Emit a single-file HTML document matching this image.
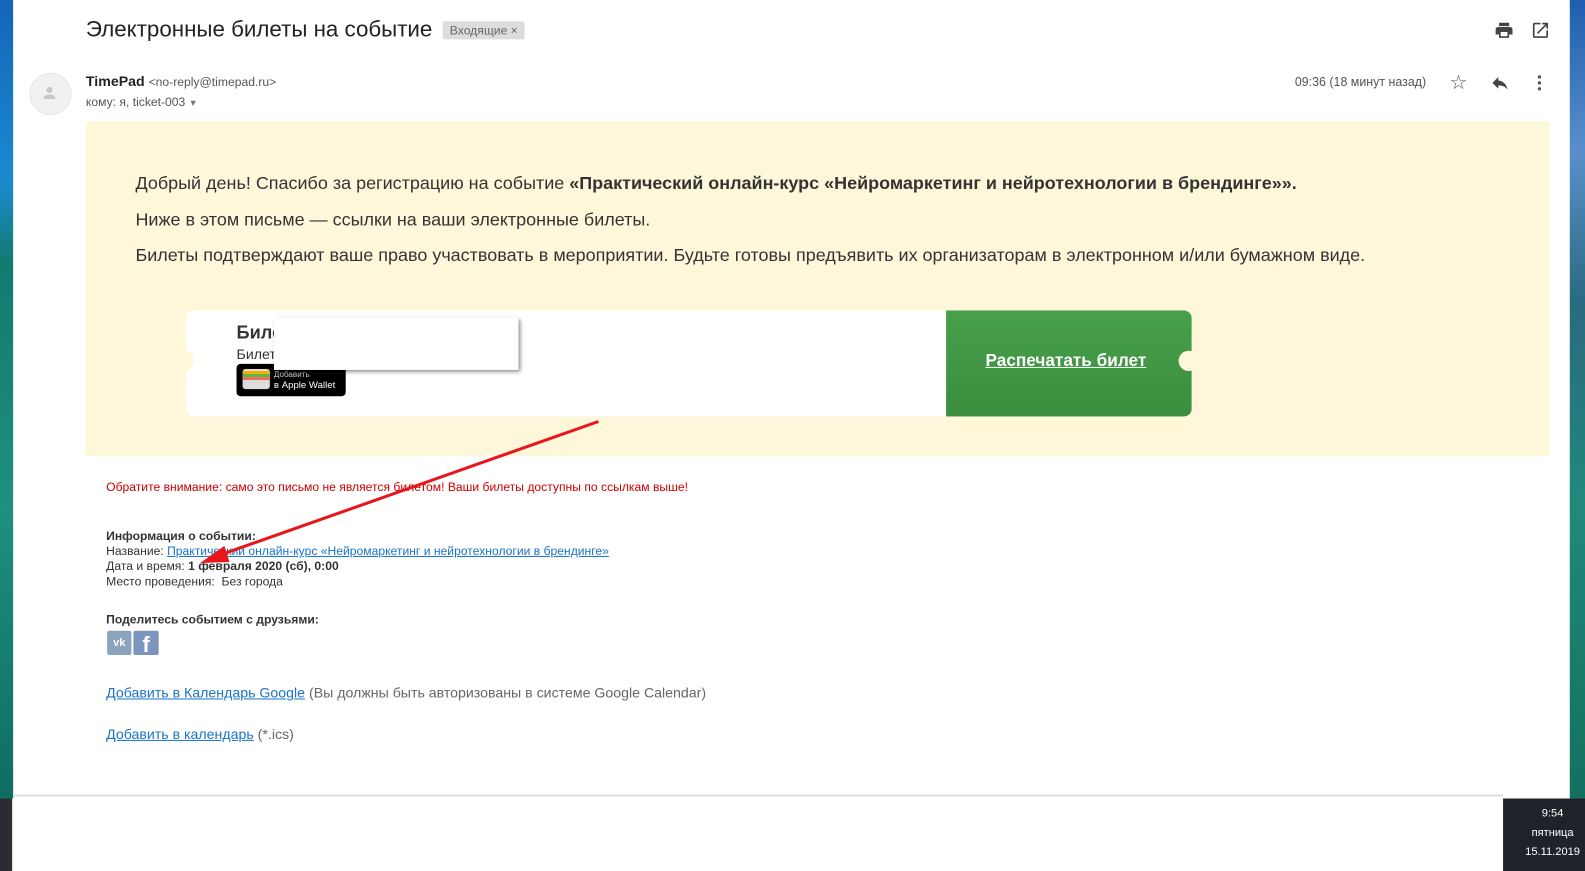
<!DOCTYPE html>
<html><head><meta charset="utf-8"><style>
body{margin:0;width:1585px;height:862px;position:relative;overflow:hidden;background:#fff;font-family:"Liberation Sans",Arial,sans-serif;}
#w{position:absolute;left:0;top:0;width:1568px;height:853px;transform:scale(1.0108);transform-origin:0 0}
.a{position:absolute}
</style></head><body><div id="w">
<div class="a" style="left:0;top:0;width:13px;height:790px;background:linear-gradient(#1565b8 0,#1a8ad0 180px,#137a70 260px,#1e8f80 500px,#0f6d63 790px)"></div>
<div class="a" style="left:0;top:790px;width:12px;height:72px;background:#2b2b30"></div>
<div class="a" style="left:1553px;top:0;width:32px;height:790px;background:linear-gradient(#1d5fae 0,#5a8fcc 150px,#2a6a80 300px,#1f8a7c 500px,#137060 790px)"></div>
<div class="a" style="left:13px;top:786px;width:1474px;height:2px;background:#ddd"></div>
<div class="a" style="left:1487px;top:790px;width:98px;height:72px;background:#1f2329;color:#fff;font-size:11px;text-align:center;line-height:19px;padding-top:6px;box-sizing:border-box">9:54<br>пятница<br>15.11.2019</div>

<div class="a" style="left:85px;top:16px;font-size:22.1px;color:#222">Электронные билеты на событие</div>
<div class="a" style="left:438px;top:21px;height:18px;padding:0 7px;background:#ddd;border-radius:2px;font-size:12px;color:#666;line-height:18px">Входящие ×</div>
<svg class="a" style="left:1478px;top:20px" width="20" height="20" viewBox="0 0 24 24"><path fill="#444" d="M19 8H5c-1.66 0-3 1.340-3 3v6h4v4h12v-4h4v-6c0-1.66-1.34-3-3-3zm-3 11H8v-5h8v5zM18 3H6v4h12V3z"/></svg>
<svg class="a" style="left:1514px;top:20px" width="20" height="20" viewBox="0 0 24 24"><path fill="#444" d="M19 19H5V5h7V3H5a2 2 0 00-2 2v14a2 2 0 002 2h14c1.1 0 2-.9 2-2v-7h-2v7zM14 3v2h3.59l-9.830 9.83 1.41 1.41L19 6.41V10h2V3h-7z"/></svg>

<div class="a" style="left:29px;top:72px;width:40px;height:40px;border-radius:50%;background:#f1f1f1;border:1px solid #e6e6e6"></div>
<svg class="a" style="left:40px;top:83px" width="18" height="18" viewBox="0 0 24 24"><circle cx="12" cy="8" r="4" fill="#c8c8c8"/><path d="M4 20c0-4 4-6 8-6s8 2 8 6z" fill="#c8c8c8"/></svg>
<div class="a" style="left:85px;top:72px;font-size:14px;color:#222"><b>TimePad</b> <span style="font-size:12px;color:#555">&lt;no-reply@timepad.ru&gt;</span></div>
<div class="a" style="left:85px;top:94px;font-size:12px;color:#555">кому: я, ticket-003 <span style="font-size:9px;color:#777">▼</span></div>
<div class="a" style="left:1281px;top:74px;font-size:12.3px;color:#555">09:36 (18 минут назад)</div>
<div class="a" style="left:1434px;top:69px;font-size:20px;color:#555">☆</div>
<svg class="a" style="left:1474px;top:72px" width="20" height="20" viewBox="0 0 24 24"><path fill="#444" d="M10 9V5l-7 7 7 7v-4.1c5 0 8.5 1.6 11 5.1-1-5-4-10-11-11z"/></svg>
<svg class="a" style="left:1513px;top:72px" width="20" height="20" viewBox="0 0 24 24"><circle cx="12" cy="5" r="2" fill="#555"/><circle cx="12" cy="12" r="2" fill="#555"/><circle cx="12" cy="19" r="2" fill="#555"/></svg>

<div class="a" style="left:85px;top:120px;width:1448px;height:331px;background:#fff7d9"></div>
<div class="a" style="left:134px;top:164px;font-size:17.8px;color:#333;line-height:35.5px;white-space:nowrap">Добрый день! Спасибо за регистрацию на событие <b>«Практический онлайн-курс «Нейромаркетинг и нейротехнологии в брендинге»».</b><br>Ниже в этом письме — ссылки на ваши электронные билеты.<br>Билеты подтверждают ваше право участвовать в мероприятии. Будьте готовы предъявить их организаторам в электронном и/или бумажном виде.</div>

<div class="a" style="left:184px;top:307px;width:995px;height:105px;background:#fff;border-radius:8px;overflow:hidden">
<div class="a" style="left:752px;top:0;width:243px;height:105px;background:linear-gradient(#48a04a,#3a8e3e)"></div>
</div>
<div class="a" style="left:177px;top:347px;width:14px;height:20px;border-radius:50%;background:#fff7d9"></div>
<div class="a" style="left:1166px;top:347px;width:20px;height:20px;border-radius:50%;background:#fff7d9"></div>
<div class="a" style="left:975px;top:347px;font-size:17px;font-weight:bold;color:#fff;text-decoration:underline">Распечатать билет</div>
<div class="a" style="left:234px;top:319px;font-size:18px;font-weight:bold;color:#333">Билет</div>
<div class="a" style="left:234px;top:342px;font-size:14px;color:#333">Билет</div>
<div class="a" style="left:234px;top:360px;width:108px;height:32px;background:#000;border-radius:4px"></div>
<div class="a" style="left:240px;top:365px;width:27px;height:20px;background:#ddd;border-radius:3px;overflow:hidden"><div style="height:3px;background:#f5b300;margin-top:2px"></div><div style="height:3px;background:#5ab848"></div><div style="height:3px;background:#f36c5a"></div></div>
<div class="a" style="left:271px;top:366px;font-size:8px;color:#ccc">Добавить</div>
<div class="a" style="left:271px;top:376px;font-size:9.5px;color:#fff">в Apple Wallet</div>
<div class="a" style="left:271px;top:314px;width:242px;height:52px;background:#fff;box-shadow:2px 2px 4px rgba(0,0,0,.5)"></div>

<div class="a" style="left:105px;top:475px;font-size:12px;color:#c00">Обратите внимание: само это письмо не является билетом! Ваши билеты доступны по ссылкам выше!</div>
<div class="a" style="left:105px;top:523px;font-size:12px;color:#333;line-height:15px"><b>Информация о событии:</b><br>Название: <span style="color:#1a73c8;text-decoration:underline">Практический онлайн-курс «Нейромаркетинг и нейротехнологии в брендинге»</span><br>Дата и время: <b>1 февраля 2020 (сб), 0:00</b><br>Место проведения:&nbsp; Без города</div>
<div class="a" style="left:105px;top:606px;font-size:12px;font-weight:bold;color:#333">Поделитесь событием с друзьями:</div>
<div class="a" style="left:106px;top:624px;width:24px;height:24px;background:#8ca3be;border-radius:2px;color:#fff;font-size:11px;font-weight:bold;text-align:center;line-height:24px">vk</div>
<div class="a" style="left:132px;top:624px;width:25px;height:24px;background:#7d94bf;border-radius:2px;color:#fff;font-size:22px;font-weight:bold;text-align:center;line-height:28px;overflow:hidden">f</div>
<div class="a" style="left:105px;top:677px;font-size:14px;color:#666"><span style="color:#1a73c8;text-decoration:underline">Добавить в Календарь Google</span> (Вы должны быть авторизованы в системе Google Calendar)</div>
<div class="a" style="left:105px;top:718px;font-size:14px;color:#666"><span style="color:#1a73c8;text-decoration:underline">Добавить в календарь</span> (*.ics)</div>

<svg class="a" style="left:0;top:0" width="1585" height="862"><line x1="592" y1="417" x2="215" y2="550" stroke="#e8161b" stroke-width="3"/><polygon points="198,557 222,540 227,556" fill="#e8161b"/></svg>
</div></body></html>
